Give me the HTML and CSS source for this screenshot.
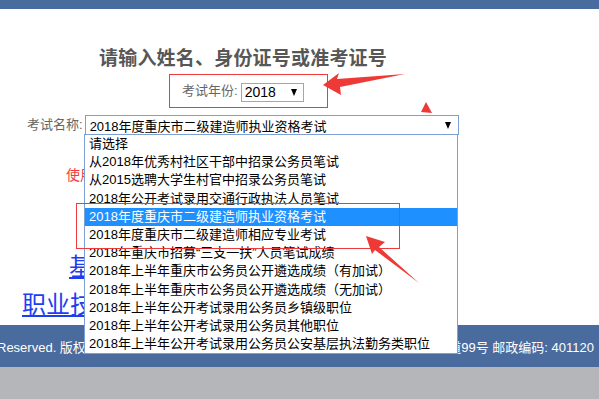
FILE: index.html
```html
<!DOCTYPE html>
<html lang="zh-CN">
<head>
<meta charset="utf-8">
<title>成绩查询</title>
<link rel="stylesheet" href="styles.css">
</head>
<body>
<div class="topbar"></div>
<div class="main">
  <h1 class="title">请输入姓名、身份证号或准考证号</h1>
  <div class="year-box">
    <span class="label">考试年份:</span>
    <div class="select year-select"><span class="val">2018</span><span class="caret"></span></div>
  </div>
  <div class="name-row">
    <span class="label">考试名称:</span>
    <div class="select name-select"><span class="val">2018年度重庆市二级建造师执业资格考试</span><span class="caret"></span></div>
  </div>
  <p class="hint">使用身份证号或准考证号查询成绩</p>
  <a class="link link-1" href="#">基层工作者成绩</a>
  <a class="link link-2" href="#">职业技能鉴定成绩</a>
</div>
<div class="footer">
  <span class="foot-left">Reserved. 版权所有：重庆市人事考试中心</span>
  <span class="foot-right">道99号 邮政编码: 401120</span>
</div>
<div class="bottom"></div>

<ul class="dropdown">
  <li>请选择</li>
  <li>从2018年优秀村社区干部中招录公务员笔试</li>
  <li>从2015选聘大学生村官中招录公务员笔试</li>
  <li>2018年公开考试录用交通行政执法人员笔试</li>
  <li class="active">2018年度重庆市二级建造师执业资格考试</li>
  <li>2018年度重庆市二级建造师相应专业考试</li>
  <li>2018年重庆市招募“三支一扶”人员笔试成绩</li>
  <li>2018年上半年重庆市公务员公开遴选成绩（有加试）</li>
  <li>2018年上半年重庆市公务员公开遴选成绩（无加试）</li>
  <li>2018年上半年公开考试录用公务员乡镇级职位</li>
  <li>2018年上半年公开考试录用公务员其他职位</li>
  <li>2018年上半年公开考试录用公务员公安基层执法勤务类职位</li>
</ul>

<div class="mark mark-2"></div>

<svg class="arrows" width="599" height="399" viewBox="0 0 599 399">
  <polygon points="323,85 339,73 337,79 405,74 340,87 341,95" fill="#ee3a36"/>
  <polygon points="426,102 421,112 432,113" fill="#ee3a36"/>
  <polygon points="366,236 385,242 379,247 419,283 375,250 372,254" fill="#ee3a36"/>
</svg>
</body>
</html>
```
FILE: styles.css
```css
html, body {
  margin: 0;
  padding: 0;
}
body {
  width: 599px;
  height: 399px;
  overflow: hidden;
  position: relative;
  background: #b5b6ba;
  font-family: "Liberation Sans", "Noto Sans CJK SC", sans-serif;
  font-size: 13px;
}
.topbar {
  height: 9px;
  background: #4a6b9d;
}
.main {
  height: 316px;
  background: #fff;
  overflow: hidden;
}
.title {
  margin: 36px 0 0 0;
  padding-left: 99px;
  font-family: "Noto Sans CJK SC", sans-serif;
  font-size: 19px;
  letter-spacing: 0.2px;
  line-height: 24px;
  font-weight: bold;
  color: #575757;
}
.year-box {
  margin: 5px 0 0 169px;
  width: 159px;
  height: 34px;
  box-sizing: border-box;
  border: 1px solid #ee3a3a;
  display: flex;
  align-items: center;
  padding-left: 12px;
  gap: 3px;
}
.label {
  color: #666;
  font-size: 13px;
  line-height: 18px;
}
.select {
  box-sizing: border-box;
  display: flex;
  align-items: center;
  justify-content: space-between;
  background: #fff;
  color: #000;
}
.year-select {
  width: 63px;
  height: 19px;
  border: 1px solid #a6a6a6;
  padding: 0 6px 0 3px;
  margin-top: 2px;
  font-size: 14px;
}
.caret {
  width: 0;
  height: 0;
  border-left: 3.5px solid transparent;
  border-right: 3.5px solid transparent;
  border-top: 7px solid #000;
}
.name-row {
  margin-top: 7px;
  padding-left: 27px;
  display: flex;
  align-items: center;
  gap: 2px;
}
.name-select {
  width: 374px;
  height: 20px;
  border: 1px solid #7c9fd6;
  padding: 0 7px 0 4px;
  font-size: 13px;
}
.hint {
  margin: 31px 0 0 0;
  padding-left: 66px;
  font-size: 14px;
  line-height: 18px;
  color: #f23b3b;
}
.link {
  display: block;
  font-family: "Noto Sans CJK SC", sans-serif;
  font-size: 24px;
  line-height: 38px;
  color: #1e3ef2;
  text-decoration: underline;
  white-space: nowrap;
}
.link-1 {
  margin-top: 62px;
  padding-left: 69px;
  width: max-content;
}
.link-2 {
  padding-left: 22px;
  width: max-content;
}
.footer {
  height: 42px;
  background: #4a6b9d;
  color: #fff;
  display: flex;
  justify-content: space-between;
  align-items: center;
  font-size: 13px;
  white-space: nowrap;
  overflow: hidden;
}
.foot-left {
  margin-left: -3px;
}
.foot-right {
  padding-right: 5px;
}
.bottom {
  height: 32px;
  background: #b5b6ba;
}
.dropdown {
  position: absolute;
  left: 84px;
  top: 134px;
  width: 374px;
  box-sizing: border-box;
  margin: 0;
  padding: 0;
  list-style: none;
  background: #fff;
  border: 1px solid #7c9fd6;
}
.dropdown li {
  height: 18.2px;
  line-height: 18.2px;
  padding-left: 4px;
  font-size: 13px;
  color: #000;
  white-space: nowrap;
  overflow: hidden;
}
.dropdown li.active {
  background: #1e90ff;
  color: #fff;
}
.mark-2 {
  position: absolute;
  left: 76px;
  top: 203px;
  width: 324px;
  height: 46px;
  border: 1px solid #ee3a3a;
  box-sizing: border-box;
}
.arrows {
  position: absolute;
  left: 0;
  top: 0;
  pointer-events: none;
}
```
